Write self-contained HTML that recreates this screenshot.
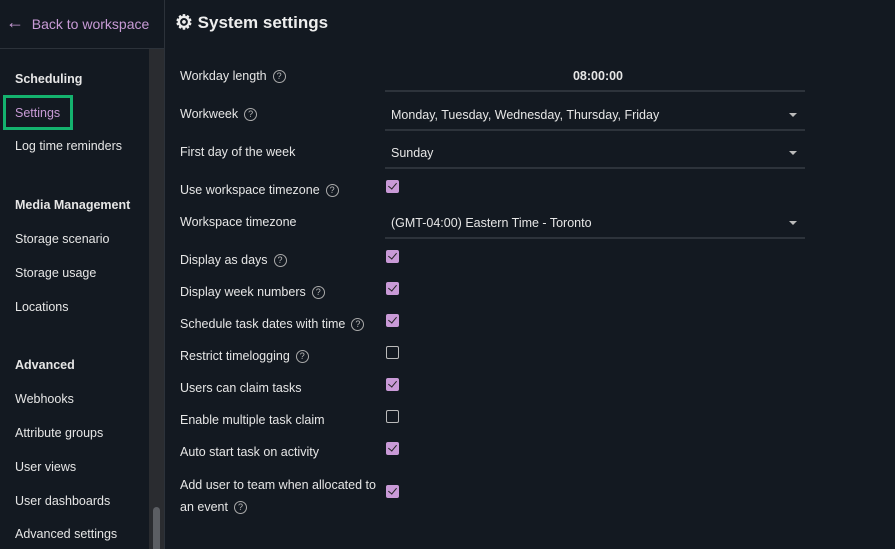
<!DOCTYPE html>
<html><head><style>
*{box-sizing:border-box;margin:0;padding:0}
html,body{width:895px;height:549px;overflow:hidden}
body{background:#131921;font-family:"Liberation Sans",sans-serif;color:#e6e6e6;position:relative;font-size:12.5px}
.sb{position:absolute;left:0;top:0;width:165px;height:549px;border-right:1px solid #2c323a}
.hdr{position:absolute;left:0;top:0;width:165px;height:49px;border-bottom:1px solid #2c323a}
.back{position:absolute;left:6px;top:12px;color:#c89bd6;font-size:14px}
.back b{font-size:18px;font-weight:normal;vertical-align:1px}
.track{position:absolute;left:149px;top:49px;width:15px;height:500px;background:#2a2c30}
.thumb{position:absolute;left:153px;top:507px;width:7px;height:42px;border-radius:4px 4px 0 0;background:#5b5e63}
.it{position:absolute;left:15px;font-size:12.5px;color:#e6e6e6}
.h{font-weight:bold}
.sel{position:absolute;left:3px;top:95px;width:70px;height:35px;border:3px solid #14b26e}
.title{position:absolute;left:175px;top:10px;font-size:17px;color:#eee;font-weight:bold}
.title span{font-size:20px;vertical-align:-1px}
.lb{position:absolute;left:180px;font-size:12.5px;color:#e6e6e6;line-height:16px}
.q{display:inline-block;width:13px;height:13px;border:1.3px solid #aaa;border-radius:50%;font-size:9px;text-align:center;line-height:11px;color:#bbb;margin-left:6px;vertical-align:0px;position:relative;top:-1px}
.f{position:absolute;left:385px;width:420px;border-bottom:2px solid #2d333b;font-size:12.5px;padding-left:6px}
.arr{position:absolute;right:8px;top:5px;width:0;height:0;border-left:4px solid transparent;border-right:4px solid transparent;border-top:4px solid #bbb}
.cb{position:absolute;left:386px;width:13px;height:13px;background:#c99ad7;border-radius:2px}
.cb:after{content:"";position:absolute;left:4px;top:1px;width:4px;height:7px;border:solid #222;border-width:0 1.6px 1.6px 0;transform:rotate(40deg)}
.un{position:absolute;left:386px;width:13px;height:13px;border:1.5px solid #bbb;border-radius:2px}
</style></head><body>
<div class="sb"></div>
<div class="hdr"></div>
<div class="back"><b>&#8592;</b>&nbsp; Back to workspace</div>
<div class="track"></div><div class="thumb"></div>
<div class="it h" style="top:72px">Scheduling</div>
<div class="it" style="top:106px;color:#c89bd6">Settings</div>
<div class="sel"></div>
<div class="it" style="top:139px">Log time reminders</div>
<div class="it h" style="top:198px">Media Management</div>
<div class="it" style="top:232px">Storage scenario</div>
<div class="it" style="top:266px">Storage usage</div>
<div class="it" style="top:300px">Locations</div>
<div class="it h" style="top:358px">Advanced</div>
<div class="it" style="top:392px">Webhooks</div>
<div class="it" style="top:426px">Attribute groups</div>
<div class="it" style="top:460px">User views</div>
<div class="it" style="top:494px">User dashboards</div>
<div class="it" style="top:527px">Advanced settings</div>

<div class="title"><span>&#9881;</span> System settings</div>

<div class="lb" style="top:68px">Workday length<span class="q">?</span></div>
<div class="f" style="top:69px;height:23px;text-align:center;font-weight:bold">08:00:00</div>
<div class="lb" style="top:106px">Workweek<span class="q">?</span></div>
<div class="f" style="top:108px;height:23px">Monday, Tuesday, Wednesday, Thursday, Friday<span class="arr"></span></div>
<div class="lb" style="top:144px">First day of the week</div>
<div class="f" style="top:146px;height:23px">Sunday<span class="arr"></span></div>
<div class="lb" style="top:182px">Use workspace timezone<span class="q">?</span></div>
<div class="cb" style="top:180px"></div>
<div class="lb" style="top:214px">Workspace timezone</div>
<div class="f" style="top:216px;height:23px">(GMT-04:00) Eastern Time - Toronto<span class="arr"></span></div>
<div class="lb" style="top:252px">Display as days<span class="q">?</span></div>
<div class="cb" style="top:250px"></div>
<div class="lb" style="top:284px">Display week numbers<span class="q">?</span></div>
<div class="cb" style="top:282px"></div>
<div class="lb" style="top:316px">Schedule task dates with time<span class="q">?</span></div>
<div class="cb" style="top:314px"></div>
<div class="lb" style="top:348px">Restrict timelogging<span class="q">?</span></div>
<div class="un" style="top:346px"></div>
<div class="lb" style="top:380px">Users can claim tasks</div>
<div class="cb" style="top:378px"></div>
<div class="lb" style="top:412px">Enable multiple task claim</div>
<div class="un" style="top:410px"></div>
<div class="lb" style="top:444px">Auto start task on activity</div>
<div class="cb" style="top:442px"></div>
<div class="lb" style="top:474px;line-height:22px">Add user to team when allocated to<br>an event<span class="q">?</span></div>
<div class="cb" style="top:485px"></div>
</body></html>
